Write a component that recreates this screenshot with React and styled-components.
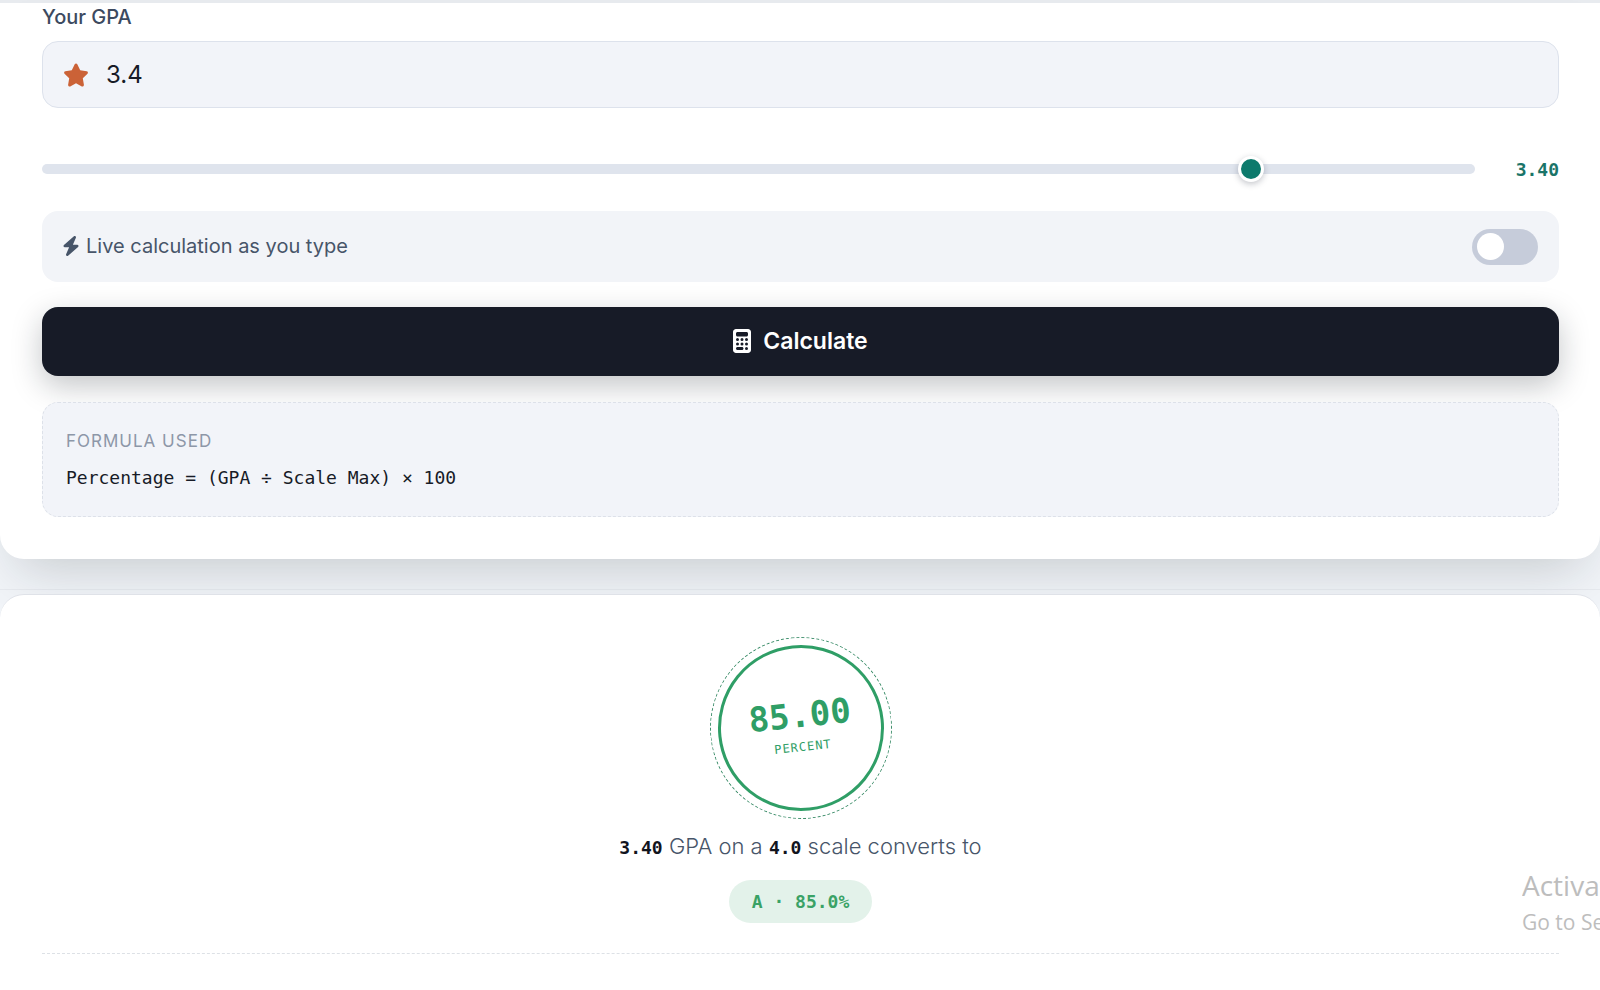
import React, { useState } from 'react';
import styled, { createGlobalStyle } from 'styled-components';
import { FaStar, FaBolt, FaCalculator } from 'react-icons/fa6';

const sans = 'Inter, "Liberation Sans", sans-serif';
const mono = '"DejaVu Sans Mono", "Liberation Mono", monospace';

const GlobalStyle = createGlobalStyle`
  *, *::before, *::after { box-sizing: border-box; }
  body {
    margin: 0;
    background: #f1f4f8;
    color: #475569;
    font-family: ${sans};
    overflow: hidden;
  }
`;

const Page = styled.main`
  position: relative;
  overflow: hidden;
  min-height: 100vh;
  display: flex;
  flex-direction: column;
`;

const ConverterSection = styled.section`
  border-top: 3px solid #e8ebef;
  border-bottom: 1px solid #e7eaef;
  padding-bottom: 30px;
  margin-bottom: 4px;
`;

const FormCard = styled.form`
  display: flex;
  flex-direction: column;
  padding: 0 41px 42px 42px;
  background: #fff;
  border-radius: 0 0 24px 24px;
  box-shadow: 0 26px 52px -18px rgba(20, 28, 36, 0.2);
`;

const FieldLabel = styled.label`
  font-size: 20px;
  font-weight: 500;
  line-height: 28px;
  margin-bottom: 10px;
  color: #3c4a5f;
`;

const InputBox = styled.div`
  display: flex;
  align-items: center;
  gap: 17px;
  height: 67px;
  padding: 0 20px;
  border: 1px solid #dde2ec;
  border-radius: 16px;
  background: #f2f4f9;
  color: #cb6237;
  font-size: 26px;
`;

const GpaInput = styled.input`
  flex: 1;
  min-width: 0;
  padding: 0;
  border: 0;
  outline: 0;
  background: transparent;
  color: #171b27;
  font-family: ${sans};
  font-size: 24px;
`;

const SliderRow = styled.div`
  display: flex;
  align-items: center;
  gap: 41px;
  margin: 42px 0 23px;
  height: 38px;
`;

const Slider = styled.input`
  flex: 1;
  min-width: 0;
  height: 10px;
  margin: 0;
  appearance: none;
  border-radius: 5px;
  background: #dfe4ed;

  &::-webkit-slider-thumb {
    appearance: none;
    width: 26px;
    height: 26px;
    border: 3px solid #fff;
    border-radius: 50%;
    background: #0d7a6c;
    box-shadow: 0 2px 6px rgba(15, 23, 42, 0.25);
  }
`;

const SliderValue = styled.output`
  font-family: ${mono};
  font-size: 18px;
  font-weight: 700;
  color: #1a7468;
`;

const ToggleRow = styled.label`
  display: flex;
  align-items: center;
  justify-content: space-between;
  height: 71px;
  padding: 0 21px 0 19px;
  border-radius: 16px;
  background: #f2f4f8;
  color: #475569;
  font-size: 20px;
`;

const ToggleText = styled.span`
  display: flex;
  align-items: center;
  gap: 5px;
  padding-bottom: 2px;
`;

const Switch = styled.input`
  appearance: none;
  display: flex;
  align-items: center;
  width: 66px;
  height: 36px;
  margin: 0;
  padding: 0 5px;
  border-radius: 18px;
  background: #c6ccda;

  &::before {
    content: '';
    width: 27px;
    height: 27px;
    border-radius: 50%;
    background: #fff;
  }

  &:checked {
    justify-content: flex-end;
    background: #0d7a6c;
  }
`;

const CalculateButton = styled.button`
  display: flex;
  align-items: center;
  justify-content: center;
  gap: 12px;
  height: 69px;
  margin: 25px 0 26px;
  padding: 0 0 2px;
  border: 0;
  border-radius: 16px;
  background: #171b27;
  box-shadow: 0 10px 30px rgba(20, 26, 36, 0.25);
  color: #fff;
  font-family: ${sans};
  font-size: 23px;
  font-weight: 600;

  svg {
    width: 18px;
    height: 24px;
  }
`;

const FormulaBox = styled.div`
  display: flex;
  flex-direction: column;
  gap: 10px;
  padding: 24px 23px 25px;
  border: 1px dashed #dde1e9;
  border-radius: 16px;
  background: #f2f4f9;
`;

const FormulaTitle = styled.span`
  font-size: 17px;
  line-height: 28px;
  letter-spacing: 1px;
  text-transform: uppercase;
  color: #8d97a8;
`;

const FormulaText = styled.code`
  font-family: ${mono};
  font-size: 18px;
  line-height: 26px;
  color: #171b27;
`;

const ResultCard = styled.section`
  position: relative;
  flex: 1;
  display: flex;
  flex-direction: column;
  align-items: center;
  padding: 42px 41px 0 42px;
  border-top: 1px solid #dfe2e8;
  border-radius: 24px 24px 0 0;
  background: #fff;
`;

const Ring = styled.div`
  width: 182px;
  height: 182px;
  padding: 7px;
  border: 1px dashed #3f8f6c;
  border-radius: 50%;
  transform: rotate(-6deg);
`;

const RingInner = styled.div`
  display: flex;
  flex-direction: column;
  align-items: center;
  justify-content: center;
  height: 100%;
  border: 3px solid #2f9e66;
  border-radius: 50%;
  color: #2f9e66;
  font-family: ${mono};
`;

const Score = styled.strong`
  font-size: 34px;
  line-height: 38px;
`;

const ScoreUnit = styled.span`
  font-size: 12px;
  line-height: 26px;
  letter-spacing: 1px;
  text-transform: uppercase;
`;

const Summary = styled.p`
  margin: 11px 0 16px;
  font-size: 22px;
  font-weight: 300;
  line-height: 32px;
  color: #475569;

  strong {
    font-family: ${mono};
    font-size: 18px;
    font-weight: 700;
    color: #11141d;
  }
`;

const GradeBadge = styled.span`
  height: 43px;
  padding: 0 23px;
  border-radius: 22px;
  background: #e3f2ea;
  color: #3aa266;
  font-family: ${mono};
  font-size: 18px;
  font-weight: 700;
  line-height: 43px;
`;

const Divider = styled.hr`
  align-self: stretch;
  margin: 30px 0 0;
  border: 0;
  border-top: 1px dashed #dde1e6;
`;

const Watermark = styled.aside`
  position: absolute;
  right: 0;
  bottom: 50px;
  width: 78px;
  overflow: hidden;
  white-space: nowrap;
  color: #bdbdbd;
  font-family: "Open Sans", "Noto Sans", sans-serif;
`;

const WatermarkTitle = styled.div`
  font-size: 28px;
  line-height: 38px;
`;

const WatermarkText = styled.div`
  font-size: 21px;
  line-height: 36px;
`;

export default function App() {
  const [gpa, setGpa] = useState('3.4');
  const [live, setLive] = useState(false);
  const value = Number(gpa) || 0;
  const percent = (value / 4) * 100;

  return (
    <>
      <GlobalStyle />
      <Page>
        <ConverterSection>
          <FormCard onSubmit={(e) => e.preventDefault()}>
            <FieldLabel htmlFor="gpa">Your GPA</FieldLabel>
            <InputBox>
              <FaStar />
              <GpaInput id="gpa" inputMode="decimal" value={gpa} onChange={(e) => setGpa(e.target.value)} />
            </InputBox>
            <SliderRow>
              <Slider
                type="range"
                aria-label="GPA"
                min="0"
                max="4"
                step="0.01"
                value={value}
                onChange={(e) => setGpa(e.target.value)}
              />
              <SliderValue>{value.toFixed(2)}</SliderValue>
            </SliderRow>
            <ToggleRow>
              <ToggleText>
                <FaBolt />
                Live calculation as you type
              </ToggleText>
              <Switch type="checkbox" checked={live} onChange={(e) => setLive(e.target.checked)} />
            </ToggleRow>
            <CalculateButton type="submit">
              <FaCalculator />
              Calculate
            </CalculateButton>
            <FormulaBox>
              <FormulaTitle>Formula used</FormulaTitle>
              <FormulaText>Percentage = (GPA ÷ Scale Max) × 100</FormulaText>
            </FormulaBox>
          </FormCard>
        </ConverterSection>
        <ResultCard>
          <Ring>
            <RingInner>
              <Score>{percent.toFixed(2)}</Score>
              <ScoreUnit>Percent</ScoreUnit>
            </RingInner>
          </Ring>
          <Summary>
            <strong>{value.toFixed(2)}</strong> GPA on a <strong>4.0</strong> scale converts to
          </Summary>
          <GradeBadge>A · {percent.toFixed(1)}%</GradeBadge>
          <Divider />
          <Watermark>
            <WatermarkTitle>Activate Windows</WatermarkTitle>
            <WatermarkText>Go to Settings to activate Windows.</WatermarkText>
          </Watermark>
        </ResultCard>
      </Page>
    </>
  );
}
